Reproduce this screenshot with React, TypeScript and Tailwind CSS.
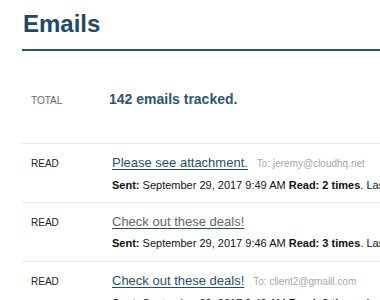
const rows = [
  { subject: 'Please see attachment.', to: 'jeremy@cloudhq.net', time: '9:49 AM', reads: 2, visited: false },
  { subject: 'Check out these deals!', to: '', time: '9:46 AM', reads: 3, visited: true },
  { subject: 'Check out these deals!', to: 'client2@gmaill.com', time: '9:40 AM', reads: 3, visited: false },
];

export default function App() {
  return (
    <div className="h-[300px] w-[380px] overflow-hidden bg-white pl-[22px] font-['Liberation_Sans',Arial,sans-serif]">
      <div className="border-b-2 border-[#245678] pt-[12px] pb-[13px]">
        <h1 className="pl-[1px] text-[24px] leading-[24px] font-bold text-[#1d4a6b]">Emails</h1>
      </div>

      <div className="flex h-[92px] items-baseline pt-[40px]">
        <div className="w-[87px] pl-[9px] text-[10px] text-[#666]">TOTAL</div>
        <div className="text-[14px] leading-[16px] font-bold text-[#2b5675]">142 emails tracked.</div>
      </div>

      {rows.map((r, i) => (
        <div key={i} className="flex h-[59px] items-baseline border-t border-[#e6e6e6] pt-[10px]">
          <div className="w-[90px] shrink-0 pl-[9px] text-[10px] text-[#222]">READ</div>
          <div className="min-w-0 flex-1 whitespace-nowrap">
            <div className="leading-[15px]">
              <a
                href="#"
                className={`text-[13px] underline decoration-[#1f4e6e] underline-offset-2 ${r.visited ? 'text-[#666]' : 'text-[#1f4e6e]'}`}
              >
                {r.subject}
              </a>
              {r.to && <span className="ml-[9px] text-[10px] text-[#a6a6a6]">To: {r.to}</span>}
            </div>
            <div className="mt-[7px] text-[11px] leading-[14px] text-[#111]">
              <b>Sent:</b> September 29, 2017 {r.time} <b>Read: {r.reads} times</b>. Last read: September 29, 2017
            </div>
          </div>
        </div>
      ))}
    </div>
  );
}
